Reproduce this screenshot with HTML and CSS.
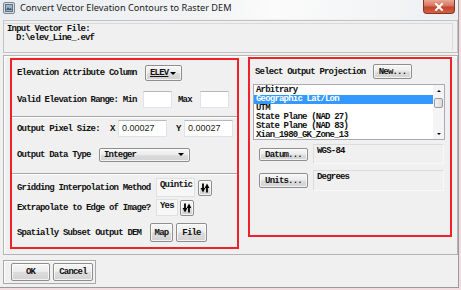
FILE: index.html
```html
<!DOCTYPE html>
<html lang="en">
<head>
    <meta charset="UTF-8">
    <title>Convert Vector Elevation Contours to Raster DEM</title>
    <link rel="stylesheet" href="styles.css">
</head>
<body>
    <div class="window">
        <div class="titlebar">
            <svg class="app-icon" width="12" height="12" viewBox="0 0 12 12">
                <rect x="0.5" y="0.5" width="11" height="11" rx="1.5" fill="#d7dde3" stroke="#7d858f"/>
                <rect x="2.5" y="2.5" width="7" height="7" fill="#9fb3c8" stroke="#5f6f82"/>
                <path d="M3 8l2-3 1.5 2 1-1.2L9 8z" fill="#3f5a78"/>
            </svg>
            <span class="title">Convert Vector Elevation Contours to Raster DEM</span>
            <div class="close">
                <svg width="10" height="8" viewBox="0 0 10 8">
                    <path d="M2 1l6 6M8 1l-6 6" stroke="#fff" stroke-width="2" stroke-linecap="square"/>
                </svg>
            </div>
        </div>

        <div class="client">
            <div class="input-file">
                <div class="input-file-inner ui">
                    <div>Input Vector File:</div>
                    <div class="path">D:\elev_Line_.evf</div>
                </div>
            </div>

            <div class="main">
                <div class="panel panel-left ui">
                    <div class="sec sec1">
                        <div class="row row-a">
                            <span class="lbl" style="width:128px">Elevation Attribute Column</span>
                            <div class="btn drop drop-elev"><u>ELEV</u><i class="tri"></i></div>
                        </div>
                        <div class="row row-b">
                            <span class="lbl" style="width:126px">Valid Elevation Range: Min</span>
                            <div class="field field-min"></div>
                            <span class="lbl lbl-max">Max</span>
                            <div class="field field-min"></div>
                        </div>
                    </div>
                    <div class="sep"></div>
                    <div class="sec sec2">
                        <div class="row row-c">
                            <span class="lbl" style="width:93px">Output Pixel Size:</span>
                            <span class="lbl axis">X</span>
                            <div class="field field-num">0.00027</div>
                            <span class="lbl axis axis-y">Y</span>
                            <div class="field field-num">0.00027</div>
                        </div>
                        <div class="row row-d">
                            <span class="lbl" style="width:82px">Output Data Type</span>
                            <div class="btn drop drop-type">Integer<i class="tri"></i></div>
                        </div>
                    </div>
                    <div class="sep"></div>
                    <div class="sec sec3">
                        <div class="row row-e">
                            <span class="lbl" style="width:139px">Gridding Interpolation Method</span>
                            <div class="value value-quintic">Quintic</div>
                            <div class="btn toggle">
                                <svg width="10" height="10" viewBox="0 0 10 10">
                                    <path d="M3 0.5v5" stroke="#000" stroke-width="1.8"/>
                                    <path d="M0.6 5h4.8L3 9.5z" fill="#000"/>
                                    <path d="M7 9.5v-5" stroke="#000" stroke-width="1.8"/>
                                    <path d="M4.6 5h4.8L7 0.5z" fill="#000"/>
                                </svg>
                            </div>
                        </div>
                        <div class="row row-f">
                            <span class="lbl" style="width:139px">Extrapolate to Edge of Image?</span>
                            <div class="value value-yes">Yes</div>
                            <div class="btn toggle">
                                <svg width="10" height="10" viewBox="0 0 10 10">
                                    <path d="M3 0.5v5" stroke="#000" stroke-width="1.8"/>
                                    <path d="M0.6 5h4.8L3 9.5z" fill="#000"/>
                                    <path d="M7 9.5v-5" stroke="#000" stroke-width="1.8"/>
                                    <path d="M4.6 5h4.8L7 0.5z" fill="#000"/>
                                </svg>
                            </div>
                        </div>
                        <div class="row row-g">
                            <span class="lbl" style="width:133px">Spatially Subset Output DEM</span>
                            <div class="btn btn-map">Map</div>
                            <div class="btn btn-file">File</div>
                        </div>
                    </div>
                </div>

                <div class="panel panel-right ui">
                    <div class="proj-head">
                        <span class="lbl" style="width:118px">Select Output Projection</span>
                        <div class="btn btn-new">New...</div>
                    </div>
                    <div class="listbox">
                        <div class="items">
                            <div class="item">Arbitrary</div>
                            <div class="item selected">Geographic Lat/Lon</div>
                            <div class="item">UTM</div>
                            <div class="item">State Plane (NAD 27)</div>
                            <div class="item">State Plane (NAD 83)</div>
                            <div class="item">Xian_1980_GK_Zone_13</div>
                        </div>
                        <div class="scrollbar">
                            <div class="sb-arrow"><i class="tri tri-up"></i></div>
                            <div class="sb-track"><div class="sb-thumb"></div></div>
                            <div class="sb-arrow"><i class="tri"></i></div>
                        </div>
                    </div>
                    <div class="prop-row prop-datum">
                        <div class="btn btn-prop">Datum...</div>
                        <div class="readout">WGS-84</div>
                    </div>
                    <div class="prop-row prop-units">
                        <div class="btn btn-prop">Units...</div>
                        <div class="readout">Degrees</div>
                    </div>
                </div>
            </div>

            <div class="actions ui">
                <div class="btn btn-ok">OK</div>
                <div class="btn btn-cancel">Cancel</div>
            </div>
        </div>
    </div>
</body>
</html>
```

FILE: styles.css
```css
* {
    box-sizing: border-box;
}

body {
    margin: 0;
    width: 461px;
    height: 290px;
    overflow: hidden;
    background-color: #f4dde0;
}

.window {
    width: 459px;
    height: 288px;
    background-color: #f0f0f0;
    border-right: 1px solid #9a9a9a;
    border-bottom: 1px solid #9a9a9a;
}

.ui {
    font-family: "Liberation Mono", monospace;
    font-weight: bold;
    font-size: 9px;
    letter-spacing: -0.8px;
    color: #111;
}

/* title bar */
.titlebar {
    height: 19px;
    display: flex;
    align-items: flex-start;
    background: linear-gradient(100deg, #e9edf1 0%, #f3f4f6 45%, #fbfbfb 60%, #eceff2 100%);
}

.app-icon {
    margin: 2px 0 0 3px;
}

.title {
    margin: 2px 0 0 5px;
    font-family: "Noto Sans", sans-serif;
    font-size: 9.2px;
    color: #1a1a1a;
    line-height: 12px;
}

.close {
    margin-left: auto;
    margin-right: 3px;
    width: 32px;
    height: 14px;
    display: flex;
    align-items: center;
    justify-content: center;
    border: 1px solid #8b3323;
    border-top: none;
    border-radius: 0 0 4px 4px;
    background: linear-gradient(#e9a797 0%, #d9735d 45%, #c2452c 55%, #d0634a 100%);
}

/* client area */
.client {
    padding-left: 3px;
}

.input-file {
    margin-top: 1px;
    width: 455px;
    height: 33px;
    border: 1px solid #c3c3c3;
    padding: 2px 4px 2px 0;
}

.input-file-inner {
    height: 100%;
    border-top: 1px solid #dadada;
    border-right: 1px solid #dadada;
    padding: 1px 0 0 3px;
    line-height: 9px;
}

.path {
    padding-left: 9px;
}

.main {
    margin-top: 2px;
    width: 455px;
    height: 200px;
    border: 1px solid #b4b4b4;
    box-shadow: inset 1px 1px #fff;
    display: flex;
    align-items: flex-start;
    padding: 1px 0 0 6px;
}

.panel {
    border: 2px solid #ee2229;
}

.panel-left {
    margin-top: 1px;
    width: 229px;
    height: 191px;
    display: flex;
    flex-direction: column;
}

.panel-right {
    margin-left: 9px;
    width: 204px;
    height: 180px;
}

.sec {
    padding-left: 5px;
}

.sec1 {
    height: 56px;
    padding-top: 5px;
}

.sec2 {
    height: 55px;
    padding-top: 2px;
}

.sec3 {
    flex: 1;
    padding-top: 3px;
}

.sep {
    height: 2px;
    border-top: 1px solid #a5a5a5;
    border-bottom: 1px solid #fff;
}

.row {
    display: flex;
    align-items: center;
    white-space: nowrap;
}

.row-a { height: 16px; }
.row-b { height: 17px; margin-top: 10px; }
.row-c { height: 17px; }
.row-d { height: 17px; margin-top: 9px; }
.row-e { height: 19px; }
.row-f { height: 17px; margin-top: 2px; }
.row-g { height: 19px; margin-top: 7px; }

.lbl {
    flex: none;
    white-space: nowrap;
}

.lbl-max {
    width: 22px;
    margin-left: 6px;
}

.axis {
    width: 8px;
}

.axis-y {
    margin-left: 9px;
}

/* buttons */
.btn {
    flex: none;
    display: flex;
    align-items: center;
    justify-content: center;
    border: 1px solid #8e8e8e;
    border-radius: 2px;
    background: linear-gradient(#f6f6f6 0%, #ececec 48%, #dddddd 52%, #d2d2d2 100%);
    box-shadow: inset 0 0 0 1px rgba(255, 255, 255, 0.7);
    white-space: nowrap;
}

.drop {
    justify-content: space-between;
    padding: 0 5px 0 4px;
}

.drop-elev {
    width: 37px;
    height: 16px;
}

.drop-type {
    width: 91px;
    height: 14px;
}

.tri {
    display: block;
    width: 0;
    height: 0;
    border-left: 3px solid transparent;
    border-right: 3px solid transparent;
    border-top: 3px solid #000;
}

.tri-up {
    border-top: none;
    border-bottom: 3px solid #000;
}

.toggle {
    width: 14px;
    height: 16px;
    margin-left: 3px;
}

.row-f .toggle {
    margin-left: 2px;
}

.btn-map {
    width: 23px;
    height: 19px;
}

.btn-file {
    width: 31px;
    height: 19px;
    margin-left: 3px;
}

/* text fields */
.field {
    flex: none;
    height: 17px;
    background-color: #fff;
    border: 1px solid #e2e3ea;
    border-top-color: #b5b7bd;
}

.field-min {
    width: 29px;
}

.field-num {
    width: 49px;
    padding: 1px 0 0 3px;
    font-family: "Liberation Sans", sans-serif;
    font-weight: normal;
    font-size: 9px;
    letter-spacing: 0;
    color: #222;
    line-height: 12px;
}

.value {
    flex: none;
    background-color: #f7f7f7;
    border: 1px solid #e0e0e0;
    padding: 2px 0 0 3px;
    line-height: 9px;
}

.value-quintic {
    width: 39px;
    height: 19px;
}

.value-yes {
    width: 22px;
    height: 17px;
}

/* projection panel */
.proj-head {
    display: flex;
    align-items: center;
    height: 15px;
    margin: 5px 0 0 5px;
    white-space: nowrap;
}

.btn-new {
    width: 39px;
    height: 15px;
}

.listbox {
    margin: 5px 0 0 3px;
    width: 192px;
    height: 56px;
    border: 1px solid #a9abb2;
    background-color: #fff;
    display: flex;
    overflow: hidden;
}

.items {
    flex: 1;
    padding-top: 0.5px;
}

.item {
    height: 9px;
    line-height: 9px;
    padding-left: 2px;
    white-space: nowrap;
}

.item.selected {
    background-color: #3399ff;
    color: #fff;
}

.scrollbar {
    width: 11px;
    display: flex;
    flex-direction: column;
    background-color: #f4f4f4;
}

.sb-arrow {
    height: 11px;
    display: flex;
    align-items: center;
    justify-content: center;
}

.sb-arrow .tri {
    border-left-width: 2px;
    border-right-width: 2px;
    border-top-width: 2px;
    border-bottom-width: 2px;
}

.sb-arrow .tri-up {
    border-top-width: 0;
}

.sb-arrow .tri:not(.tri-up) {
    border-bottom-width: 0;
}

.sb-track {
    flex: 1;
    padding: 2px 0 0 1px;
}

.sb-thumb {
    width: 9px;
    height: 10px;
    border: 1px solid #9a9a9a;
    border-radius: 2px;
    background: linear-gradient(90deg, #f3f3f3, #dadada);
}

.prop-row {
    display: flex;
    align-items: flex-start;
    margin-left: 9px;
}

.prop-datum {
    margin-top: 4px;
    height: 20px;
}

.prop-units {
    margin-top: 6px;
    height: 21px;
}

.btn-prop {
    width: 49px;
}

.prop-datum .btn-prop {
    height: 13px;
    margin-top: 4px;
}

.prop-units .btn-prop {
    height: 15px;
    margin-top: 3px;
}

.readout {
    margin-left: 5px;
    width: 131px;
    height: 100%;
    border: 1px solid #dcdcdc;
    border-right-color: #f8f8f8;
    border-bottom-color: #f8f8f8;
    padding: 2px 0 0 3px;
    line-height: 9px;
}

/* bottom buttons */
.actions {
    margin-top: 5px;
    width: 93px;
    height: 24px;
    border: 1px solid #a9a9a9;
    box-shadow: inset 1px 1px #fff;
    display: flex;
    padding: 2px 0 0 7px;
}

.btn-ok {
    width: 39px;
    height: 18px;
}

.btn-cancel {
    width: 40px;
    height: 18px;
    margin-left: 3px;
}
```
